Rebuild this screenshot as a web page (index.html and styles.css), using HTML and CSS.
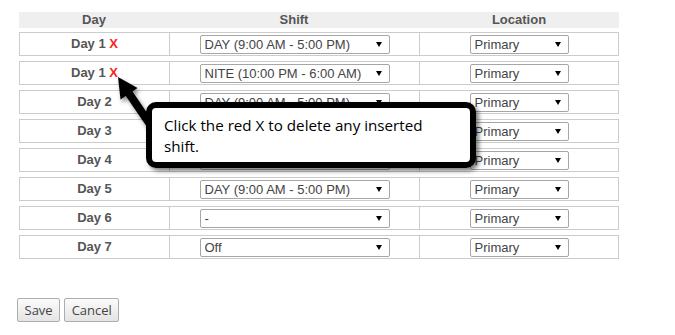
FILE: index.html
```html
<!DOCTYPE html>
<html lang="en">
<head>
    <meta charset="UTF-8">
    <meta name="viewport" content="width=device-width, initial-scale=1.0">
    <title>Shift Schedule</title>
    <link rel="stylesheet" href="styles.css">
</head>
<body>

<div class="page">
    <div class="schedule">
        <div class="sched-head">
            <div>Day</div>
            <div>Shift</div>
            <div>Location</div>
        </div>

        <div class="sched-row">
            <div class="day">Day 1 <span class="del">X</span></div>
            <div class="cell"><span class="pick shift"><select><option>DAY (9:00 AM - 5:00 PM)</option><option>NITE (10:00 PM - 6:00 AM)</option><option>-</option><option>Off</option></select></span></div>
            <div class="cell"><span class="pick loc"><select><option>Primary</option></select></span></div>
        </div>
        <div class="sched-row">
            <div class="day">Day 1 <span class="del">X</span></div>
            <div class="cell"><span class="pick shift"><select><option>NITE (10:00 PM - 6:00 AM)</option><option>DAY (9:00 AM - 5:00 PM)</option><option>-</option><option>Off</option></select></span></div>
            <div class="cell"><span class="pick loc"><select><option>Primary</option></select></span></div>
        </div>
        <div class="sched-row">
            <div class="day">Day 2</div>
            <div class="cell"><span class="pick shift"><select><option>DAY (9:00 AM - 5:00 PM)</option><option>NITE (10:00 PM - 6:00 AM)</option><option>-</option><option>Off</option></select></span></div>
            <div class="cell"><span class="pick loc"><select><option>Primary</option></select></span></div>
        </div>
        <div class="sched-row">
            <div class="day">Day 3</div>
            <div class="cell"><span class="pick shift"><select><option>DAY (9:00 AM - 5:00 PM)</option><option>NITE (10:00 PM - 6:00 AM)</option><option>-</option><option>Off</option></select></span></div>
            <div class="cell"><span class="pick loc"><select><option>Primary</option></select></span></div>
        </div>
        <div class="sched-row">
            <div class="day">Day 4</div>
            <div class="cell"><span class="pick shift"><select><option>DAY (9:00 AM - 5:00 PM)</option><option>NITE (10:00 PM - 6:00 AM)</option><option>-</option><option>Off</option></select></span></div>
            <div class="cell"><span class="pick loc"><select><option>Primary</option></select></span></div>
        </div>
        <div class="sched-row">
            <div class="day">Day 5</div>
            <div class="cell"><span class="pick shift"><select><option>DAY (9:00 AM - 5:00 PM)</option><option>NITE (10:00 PM - 6:00 AM)</option><option>-</option><option>Off</option></select></span></div>
            <div class="cell"><span class="pick loc"><select><option>Primary</option></select></span></div>
        </div>
        <div class="sched-row">
            <div class="day">Day 6</div>
            <div class="cell"><span class="pick shift"><select><option>-</option><option>DAY (9:00 AM - 5:00 PM)</option><option>NITE (10:00 PM - 6:00 AM)</option><option>Off</option></select></span></div>
            <div class="cell"><span class="pick loc"><select><option>Primary</option></select></span></div>
        </div>
        <div class="sched-row">
            <div class="day">Day 7</div>
            <div class="cell"><span class="pick shift"><select><option>Off</option><option>DAY (9:00 AM - 5:00 PM)</option><option>NITE (10:00 PM - 6:00 AM)</option><option>-</option></select></span></div>
            <div class="cell"><span class="pick loc"><select><option>Primary</option></select></span></div>
        </div>
    </div>

    <div class="actions">
        <button class="btn">Save</button>
        <button class="btn">Cancel</button>
    </div>

    <!-- callout pointing at the delete X -->
    <svg class="callout-arrow" width="70" height="80" viewBox="0 0 70 80">
        <line x1="18" y1="22" x2="48" y2="66" stroke="#000" stroke-width="8"/>
        <polygon points="8,7 27.5,18 10.5,29.5" fill="#000"/>
    </svg>
    <div class="callout">Click the red X to delete any inserted<br>shift.</div>
</div>

</body>
</html>
```

FILE: styles.css
```css
body {
    margin: 0;
    font-family: "Liberation Sans", Arial, sans-serif;
    background: #fff;
}
.page {
    position: relative;
    width: 675px;
    height: 335px;
}
.schedule {
    width: 600px;
    margin-left: 19px;
    padding-top: 12px;
}
.sched-head {
    display: grid;
    grid-template-columns: 150px 250px 200px;
    height: 16px;
    line-height: 16px;
    background: #efefef;
    font-size: 13px;
    font-weight: bold;
    color: #555;
    text-align: center;
}
.sched-row {
    display: grid;
    grid-template-columns: 149px 250px 199px;
    box-sizing: border-box;
    height: 24px;
    margin-top: 5px;
    border: 1px solid #ccc;
}
.sched-head + .sched-row {
    margin-top: 4px;
}
.day {
    line-height: 22px;
    text-align: center;
    font-size: 13px;
    font-weight: bold;
    color: #555;
}
.del {
    color: #f22;
}
.cell {
    border-left: 1px solid #ccc;
    display: flex;
    align-items: center;
    justify-content: center;
}
.pick {
    position: relative;
    display: block;
    height: 19px;
}
.pick select {
    -webkit-appearance: none;
    appearance: none;
    width: 100%;
    height: 19px;
    margin: 0;
    padding: 0 0 0 4px;
    border: 1px solid #a6a6a6;
    border-radius: 2px;
    background: #fff;
    font-family: "Liberation Sans", Arial, sans-serif;
    font-size: 13px;
    color: #444;
    outline: none;
}
.pick::after {
    content: "";
    position: absolute;
    right: 8px;
    top: 7px;
    border-left: 3px solid transparent;
    border-right: 3px solid transparent;
    border-top: 5px solid #000;
    pointer-events: none;
}
.pick.shift {
    width: 190px;
}
.pick.loc {
    width: 99px;
}
.actions {
    margin: 39px 0 0 17px;
    display: flex;
    gap: 4px;
}
.btn {
    height: 24px;
    padding: 0 6.5px;
    border: 1px solid #adadad;
    border-radius: 2px;
    background: linear-gradient(#fbfbfb, #e4e4e4);
    font-family: "Open Sans", sans-serif;
    font-size: 13px;
    color: #444;
    cursor: pointer;
}
.callout-arrow {
    position: absolute;
    left: 110px;
    top: 70px;
    filter: drop-shadow(2px 3px 2px rgba(0, 0, 0, 0.45));
}
.callout {
    position: absolute;
    left: 146px;
    top: 102px;
    width: 300px;
    padding: 7px 6px 5px 12px;
    border: 6px solid #000;
    border-radius: 10px;
    background: #fff;
    box-shadow: 3px 3px 4px rgba(0, 0, 0, 0.5);
    font-family: "Open Sans", sans-serif;
    font-size: 15.2px;
    line-height: 21px;
    color: #000;
}
```
